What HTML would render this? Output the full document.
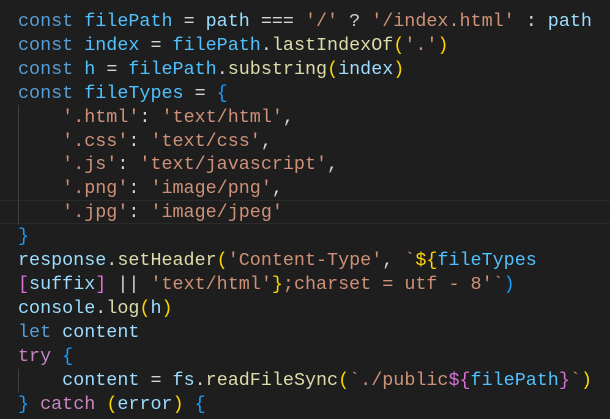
<!DOCTYPE html>
<html><head><meta charset="utf-8"><style>
html,body{margin:0;padding:0;background:#1e1e1e;width:610px;height:419px;overflow:hidden}
pre{margin:0;position:absolute;left:18px;top:10px;font:18.4px/23.9px "Liberation Mono",monospace;color:#d4d4d4;white-space:pre}
.k{color:#569cd6}.c{color:#4fc1ff}.v{color:#9cdcfe}.f{color:#dcdcaa}.s{color:#ce9178}.p{color:#c586c0}
.y{color:#ffd700}.m{color:#da70d6}.b{color:#179fff}
.hl{position:absolute;left:0;top:200px;width:610px;height:22px;border-top:1px solid #2a2a2a;border-bottom:1px solid #2a2a2a}
.g{position:absolute;left:18px;width:1px;background:#404040}
</style></head><body>
<div class="hl"></div>
<div class="g" style="top:105px;height:120px"></div>
<div class="g" style="top:369px;height:24px"></div>
<pre><span class="k">const</span> <span class="c">filePath</span> = <span class="v">path</span> === <span class="s">'/'</span> ? <span class="s">'/index.html'</span> : <span class="v">path</span>
<span class="k">const</span> <span class="c">index</span> = <span class="c">filePath</span>.<span class="f">lastIndexOf</span><span class="y">(</span><span class="s">'.'</span><span class="y">)</span>
<span class="k">const</span> <span class="c">h</span> = <span class="c">filePath</span>.<span class="f">substring</span><span class="y">(</span><span class="v">index</span><span class="y">)</span>
<span class="k">const</span> <span class="c">fileTypes</span> = <span class="b">{</span>
    <span class="s">'.html'</span>: <span class="s">'text/html'</span>,
    <span class="s">'.css'</span>: <span class="s">'text/css'</span>,
    <span class="s">'.js'</span>: <span class="s">'text/javascript'</span>,
    <span class="s">'.png'</span>: <span class="s">'image/png'</span>,
    <span class="s">'.jpg'</span>: <span class="s">'image/jpeg'</span>
<span class="b">}</span>
<span class="v">response</span>.<span class="f">setHeader</span><span class="y">(</span><span class="s">'Content-Type'</span>, <span class="s">`</span><span class="y">${</span><span class="c">fileTypes</span>
<span class="m">[</span><span class="v">suffix</span><span class="m">]</span> || <span class="s">'text/html'</span><span class="y">}</span><span class="s">;charset = utf - 8'`</span><span class="b">)</span>
<span class="v">console</span>.<span class="f">log</span><span class="y">(</span><span class="v">h</span><span class="y">)</span>
<span class="k">let</span> <span class="v">content</span>
<span class="p">try</span> <span class="b">{</span>
    <span class="v">content</span> = <span class="v">fs</span>.<span class="f">readFileSync</span><span class="y">(</span><span class="s">`./public</span><span class="m">${</span><span class="c">filePath</span><span class="m">}</span><span class="s">`</span><span class="y">)</span>
<span class="b">}</span> <span class="p">catch</span> <span class="y">(</span><span class="v">error</span><span class="y">)</span> <span class="b">{</span></pre>
</body></html>
